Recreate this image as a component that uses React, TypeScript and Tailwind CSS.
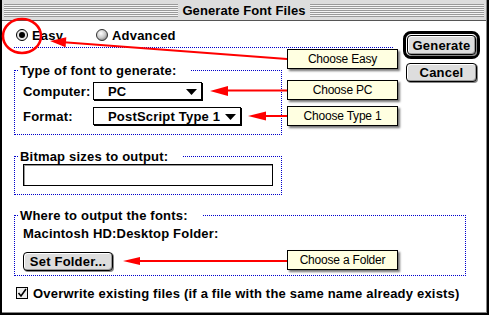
import React from "react";

const Stripes = () => (
  <div className="flex-1 flex flex-col gap-px bg-[#f4f4f4]">
    {[0, 1, 2, 3, 4, 5, 6].map((i) => (
      <div key={i} className="h-px bg-[#9a9a9a]" />
    ))}
  </div>
);

const GroupLabel = ({ children }: { children: React.ReactNode }) => (
  <div className="w-fit bg-white pl-[1px] pr-[15px] -ml-[4px] -mt-[8px] leading-[15px] font-bold text-[13px] tracking-[0.2px]">
    {children}
  </div>
);

const Triangle = () => (
  <svg width="11" height="6" className="ml-auto mt-[2px]" viewBox="0 0 11 6">
    <polygon points="0,0 11,0 5.5,6" fill="#000" />
  </svg>
);

const Popup = ({ label, w }: { label: string; w: string }) => (
  <div
    className={`flex items-center h-[18px] border border-black bg-white shadow-[1px_1px_0_#000] pl-[14px] pr-[4px] ${w}`}
  >
    <span className="font-bold text-[13px] leading-[15px] tracking-[0.2px]">{label}</span>
    <Triangle />
  </div>
);

const Callout = ({ top, text }: { top: string; text: string }) => (
  <div
    className={`absolute left-[287px] ${top} w-[111px] h-[20px] border border-black bg-[#ffffe1] flex items-center justify-center text-[12px] tracking-[-0.2px] shadow-[2px_2px_2px_rgba(0,0,0,0.55)]`}
  >
    {text}
  </div>
);

const MacButton = ({ label, w, h }: { label: string; w: string; h: string }) => (
  <div
    className={`${w} ${h} flex items-center justify-center rounded-[4px] border border-black bg-[#dddddd] shadow-[inset_1px_1px_0_#fff,inset_-1px_-1px_0_#999,1px_1px_0_#888] font-bold text-[13px] leading-[15px] tracking-[0.2px]`}
  >
    {label}
  </div>
);

export default function App() {
  return (
    <div className="relative w-[489px] h-[322px] bg-white text-black font-['Liberation_Sans',Arial,sans-serif] overflow-hidden">
      <div className="w-[489px] h-[315px] border-l-2 border-r-2 border-b-2 border-black">
        <div className="w-full h-full flex flex-col border-r border-b border-[#888]">
          {/* Title bar */}
          <div className="h-[21px] bg-[#dddddd] border-b border-[#555] flex items-center px-[2px]">
            <Stripes />
            <div className="px-[4px] font-bold text-[13px] leading-[15px] tracking-[0.1px]">Generate Font Files</div>
            <Stripes />
          </div>

          {/* Content */}
          <div className="flex-1 bg-white pl-[12px] flex flex-col">
            <div className="flex">
              {/* Left column */}
              <div className="w-[379px] pt-[7px] flex flex-col">
                <div className="h-[14px] flex items-center pl-[2px]">
                  <div className="w-[80px] flex items-center gap-[4px]">
                    <svg width="12" height="12" viewBox="0 0 12 12">
                      <circle cx="6" cy="6" r="5.5" fill="#e6e6e6" stroke="#000" />
                      <circle cx="6" cy="6" r="3" fill="#000" />
                    </svg>
                    <span className="font-bold text-[13px] leading-[15px] tracking-[0.2px]">Easy</span>
                  </div>
                  <div className="flex items-center gap-[4px]">
                    <svg width="12" height="12" viewBox="0 0 12 12">
                      <defs>
                        <radialGradient id="rg" cx="0.4" cy="0.35" r="0.7">
                          <stop offset="0" stopColor="#ffffff" />
                          <stop offset="0.6" stopColor="#c8c8c8" />
                          <stop offset="1" stopColor="#7a7a7a" />
                        </radialGradient>
                      </defs>
                      <circle cx="6" cy="6" r="5.5" fill="url(#rg)" stroke="#333" />
                    </svg>
                    <span className="font-bold text-[13px] leading-[15px] tracking-[0.2px]">Advanced</span>
                  </div>
                </div>
                <div className="mt-[5px] h-0 border-t border-dotted border-[#0000cc]" />

                {/* Group 1 */}
                <div className="mt-[22px] w-[268px] border border-dotted border-[#0000cc] pl-[8px] pb-[9px]">
                  <GroupLabel>Type of font to generate:</GroupLabel>
                  <div className="mt-[4px] flex items-center">
                    <span className="w-[70px] font-bold text-[13px] leading-[15px] tracking-[0.2px]">Computer:</span>
                    <Popup label="PC" w="w-[109px]" />
                  </div>
                  <div className="mt-[7px] flex items-center">
                    <span className="w-[70px] font-bold text-[13px] leading-[15px] tracking-[0.2px]">Format:</span>
                    <Popup label="PostScript Type 1" w="w-[148px]" />
                  </div>
                </div>

                {/* Group 2 */}
                <div className="mt-[21px] w-[268px] border border-dotted border-[#0000cc] pl-[8px] pb-[8px]">
                  <GroupLabel>Bitmap sizes to output:</GroupLabel>
                  <div className="w-[250px] h-[22px] border border-black bg-white shadow-[inset_1px_1px_0_#999]" />
                </div>
              </div>

              {/* Right column */}
              <div className="ml-[10px] pt-[10px] flex flex-col items-center">
                <div className="rounded-[8px] border-[3px] border-black p-[1px] bg-white">
                  <MacButton label="Generate" w="w-[69px]" h="h-[20px]" />
                </div>
                <div className="mt-[4px]">
                  <MacButton label="Cancel" w="w-[71px]" h="h-[19px]" />
                </div>
              </div>
            </div>

            {/* Group 3 */}
            <div className="mt-[20px] w-[452px] border border-dotted border-[#0000cc] pl-[8px] pb-[4px]">
              <GroupLabel>Where to output the fonts:</GroupLabel>
              <div className="mt-[3px] font-bold text-[13px] leading-[15px] tracking-[0.2px]">Macintosh HD:Desktop Folder:</div>
              <div className="mt-[11px]">
                <MacButton label="Set Folder..." w="w-[90px]" h="h-[19px]" />
              </div>
            </div>

            {/* Checkbox */}
            <div className="mt-[10px] h-[14px] pl-[2px] flex items-center gap-[5px]">
              <svg width="12" height="12" viewBox="0 0 12 12">
                <rect x="0.5" y="0.5" width="11" height="11" fill="#eeeeee" stroke="#000" />
                <path d="M2.5 6 L5 9 L10 2" fill="none" stroke="#000" strokeWidth="1.6" />
              </svg>
              <span className="font-bold text-[13px] leading-[15px] tracking-[0.2px]">
                Overwrite existing files (if a file with the same name already exists)
              </span>
            </div>
          </div>
        </div>
      </div>

      {/* Annotations */}
      <svg
        className="absolute left-0 top-0 pointer-events-none"
        width="489"
        height="322"
        viewBox="0 0 489 322"
      >
        <ellipse cx="22" cy="36" rx="19" ry="17" fill="none" stroke="#ff0000" strokeWidth="2.5" />
        <line x1="287" y1="59" x2="64" y2="42.2" stroke="#ff0000" strokeWidth="2" />
        <polygon points="50,41 66.3,37.2 65.6,47.2" fill="#ff0000" />
        <line x1="287" y1="90.5" x2="226" y2="90.5" stroke="#ff0000" strokeWidth="2" />
        <polygon points="210,91 228,86 228,96" fill="#ff0000" />
        <line x1="287" y1="116" x2="264" y2="116" stroke="#ff0000" strokeWidth="2" />
        <polygon points="248,116 266,111.5 266,120.5" fill="#ff0000" />
        <line x1="287" y1="261" x2="138" y2="261" stroke="#ff0000" strokeWidth="2" />
        <polygon points="123,261 140,257 140,265" fill="#ff0000" />
      </svg>

      <Callout top="top-[49px]" text="Choose Easy" />
      <Callout top="top-[80px]" text="Choose PC" />
      <Callout top="top-[106px]" text="Choose Type 1" />
      <Callout top="top-[250px]" text="Choose a Folder" />
    </div>
  );
}
